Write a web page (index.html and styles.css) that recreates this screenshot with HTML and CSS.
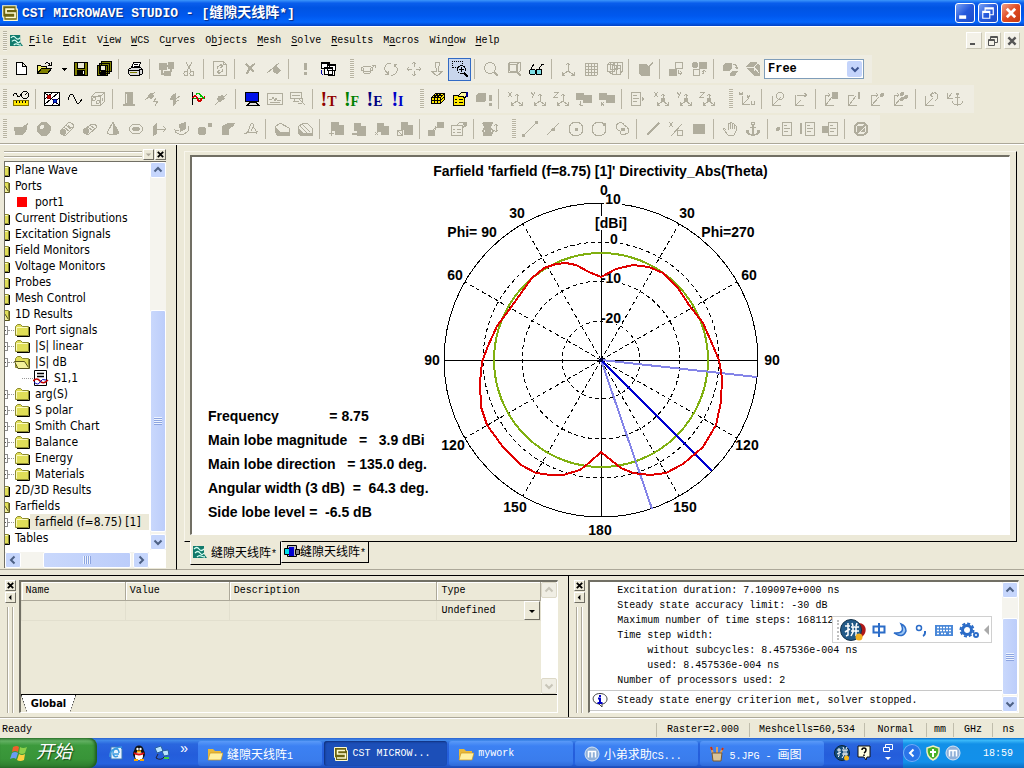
FILE: index.html
```
<!DOCTYPE html>
<html lang="zh-CN">
<head>
  <meta charset="UTF-8">
  <meta name="viewport" content="width=device-width, initial-scale=1.0">
  <title>CST MICROWAVE STUDIO</title>
  <link rel="stylesheet" href="styles.css">
</head>

<body>
  <!-- shared icons -->
  <svg class="sprite" aria-hidden="true">
    <symbol id="logo" viewBox="0 0 16 16">
      <path d="M1.500 1.500h12v3h1v10h-12v-3h-1z" fill="#6b6410" stroke="#fffbd0"/>
      <path d="M12 4.500H4.500v3.500h8v4H4" fill="none" stroke="#fffbd0" stroke-width="1.500"/>
    </symbol>
    <symbol id="waves" viewBox="0 0 16 14">
      <path d="M1 1h11v8l3 4H1z" fill="#117a6c"/>
      <path d="M2 4q3-3 5 0t5 0M3 8q3-3 5 0t4 0M5 12q2-2 4-1t4 1" fill="none" stroke="#d8fff4" stroke-width="1.300"/>
    </symbol>
    <symbol id="folder" viewBox="0 0 16 14">
      <path d="M15.500 4v9.500H3" fill="none" stroke="#000"/>
      <path d="M1.500 12.500v-9l2-2h3l2 2h6v9z" fill="#e0de58" stroke="#8c8a30"/>
      <path d="M2.500 11.500v-7h11" fill="none" stroke="#fbfac0"/>
    </symbol>
    <symbol id="folder-open" viewBox="0 0 16 14">
      <path d="M1.500 12.500v-9l2-2h3l2 2h6v9z" fill="#e0de58" stroke="#8c8a30"/>
      <path d="M15.500 4v9.500H4L.5 6.500h10l4 6" fill="#f3f19a" stroke="#55531a"/>
    </symbol>
    <symbol id="up" viewBox="0 0 10 10"><path d="M1.500 6.500L5 3l3.500 3.500" fill="none" stroke="currentColor" stroke-width="2"/></symbol>
    <symbol id="down" viewBox="0 0 10 10"><path d="M1.500 3.500L5 7l3.500-3.500" fill="none" stroke="currentColor" stroke-width="2"/></symbol>
    <symbol id="left" viewBox="0 0 10 10"><path d="M6.500 1.500L3 5l3.500 3.500" fill="none" stroke="currentColor" stroke-width="2"/></symbol>
    <symbol id="right" viewBox="0 0 10 10"><path d="M3.500 1.500L7 5 3.500 8.500" fill="none" stroke="currentColor" stroke-width="2"/></symbol>
    <symbol id="close" viewBox="0 0 10 10"><path d="M2 2l6 6M8 2L2 8" fill="none" stroke="currentColor" stroke-width="2"/></symbol>
    <symbol id="restore" viewBox="0 0 12 12"><path d="M3.500 4V1.500h7v6H8M3 2.500h8M1.500 4.500h6v6h-6zM1 5.500h7" fill="none" stroke="currentColor"/></symbol>
    <symbol id="yellow-folder" viewBox="0 0 16 16">
      <path d="M1 13V3h5l2 2h6v8z" fill="#e9b93a"/>
      <path d="M1 14l2-7h13l-2 7z" fill="#fff0a0" stroke="#c89520" stroke-width=".7"/>
    </symbol>
    <symbol id="pinyin" viewBox="0 0 16 16">
      <circle cx="8" cy="8" r="7.500" fill="#174d78" stroke="#0a2538"/>
      <path d="M3 5h4M5 3v8l-1 1M3 9l4-2M8 5h6M8 9h6M10 5v5l-2 3M12 5v8M9 2l1 2M13 2l-1 2" fill="none" stroke="#fff"/>
      <circle cx="12.500" cy="13" r="2.500" fill="#f6b81a"/>
    </symbol>
    <symbol id="maxthon" viewBox="0 0 16 16">
      <circle cx="8" cy="8" r="7" fill="#8fb0d8" stroke="#d8e6f6"/>
      <path d="M4.500 11.500v-6h7v6M8 5.500v6" fill="none" stroke="#fff" stroke-width="1.500"/>
    </symbol>
  </svg>

  <header class="title-bar">
    <svg class="title-icon"><use href="#logo"/></svg>
    <h1>CST MICROWAVE STUDIO - [<span class="han">缝隙天线阵</span>*]</h1>
    <button class="caption-btn" aria-label="Minimize"><svg viewBox="0 0 12 12"><path d="M1 9.500h6" stroke="#fff" stroke-width="3"/></svg></button>
    <button class="caption-btn" aria-label="Restore"><svg><use href="#restore"/></svg></button>
    <button class="caption-btn caption-close" aria-label="Close"><svg><use href="#close"/></svg></button>
  </header>

  <nav class="menu-bar">
    <span class="grip"></span>
    <svg class="menu-icon"><use href="#waves"/></svg>
    <button><u>F</u>ile</button>
    <button><u>E</u>dit</button>
    <button>V<u>i</u>ew</button>
    <button><u>W</u>CS</button>
    <button>C<u>u</u>rves</button>
    <button>O<u>b</u>jects</button>
    <button><u>M</u>esh</button>
    <button><u>S</u>olve</button>
    <button><u>R</u>esults</button>
    <button>M<u>a</u>cros</button>
    <button>Win<u>d</u>ow</button>
    <button><u>H</u>elp</button>
    <div class="child-btns">
      <button aria-label="Minimize"><svg viewBox="0 0 12 12"><path d="M2 9h5" stroke="#555" stroke-width="2"/></svg></button>
      <button aria-label="Restore"><svg><use href="#restore"/></svg></button>
      <button aria-label="Close"><svg><use href="#close"/></svg></button>
    </div>
  </nav>

  <!-- file / view tools -->
  <div class="toolbar-row">
    <div class="toolbar">
      <span class="grip"></span>
      <button class="tool"><svg><path d="M3.500 1.500h6l4 4v8h-10zM9.500 1.500v4h4" fill="#fff"/></svg></button>
      <button class="tool"><svg><path d="M1.500 12.500v-8h3l1 1h5v3" fill="#f4f060"/><path d="M1.500 12.500l4-5h10l-4 5z" fill="#808000"/><path d="M9 2.500q3-2 5 1M12 4h3V1"/></svg></button>
      <button class="tool tool-arrow"><svg viewBox="0 0 16 16"><path class="fill" d="M5 7h6L8 10z"/></svg></button>
      <button class="tool"><svg><path d="M1.500 1.500h13v13h-13z" fill="#808000"/><path d="M4.500 2v5h7V2" fill="#ece9d8"/><path class="fill" d="M4 9h8v5H4z"/><path d="M10.500 10v3" stroke="#fff"/></svg></button>
      <button class="tool"><svg><path d="M5.500.5h10v10h-10zM3.500 2.500h10v10h-10zM1.500 4.500h10v10h-10z" fill="#808000"/><path d="M4 5v4h5V5" fill="#ece9d8"/><path class="fill" d="M4 11h6v3H4z"/></svg></button>
      <span class="sep"></span>
      <button class="tool"><svg><path d="M4.500 7l2-5.500h7L11.500 7zM7 3.500h4M6.500 5.500h4" fill="#fff"/><path d="M1.500 8.500l3-2h9l2 2v4l-3 2h-9l-2-2zM1.500 9h11v5M12.500 9l3-1" fill="#ddd"/><path d="M3 11.500h7" stroke="#808000"/></svg></button>
      <span class="sep"></span>
      <button class="tool" disabled><svg><path class="fill" d="M1 2h8v7H1zM10 1h6v7h-6zM6 10h7v5H6z"/><path d="M3.500 9v4h3M12.500 8v3M4 5h7" stroke-width="2"/></svg></button>
      <button class="tool" disabled><svg><path d="M5 1l5 9M11 1L6 10"/><circle cx="5" cy="12.500" r="2"/><circle cx="11" cy="12.500" r="2"/></svg></button>
      <span class="sep"></span>
      <button class="tool" disabled><svg><path d="M1.500.5h10l3 3v11h-13zM11.500.5v3h3M5 8q0-4 5-3M8 3l3 2-3 2M11 8q0 4-5 3M8 13l-3-2 3-2"/></svg></button>
      <span class="sep"></span>
      <button class="tool" disabled><svg><path d="M3 3l8 8M12 3Q6 6 4 13" stroke-width="2"/></svg></button>
      <button class="tool" disabled><svg><path d="M1 12L13 2"/><path class="fill" d="M7 6l4-1 4 5-4 3-4-2z"/></svg></button>
      <span class="sep"></span>
      <button class="tool" disabled><svg><path d="M8 2v7M8 11v3" stroke-width="3"/></svg></button>
      <button class="tool"><svg><path d="M1 1.500h8v6H1zM1 2.500h8M7.500 3.500h8v6h-8zM7.500 4.500h8M4.500 6.500h8v7h-8zM4.500 7.500h8M8.500 9.500h6v5h-6z" fill="#fff"/><path d="M1 9v3l2 2" stroke="#0000a0"/></svg></button>
    </div>
    <div class="toolbar">
      <span class="grip"></span>
      <button class="tool" disabled><svg><ellipse cx="7" cy="8" rx="6" ry="2.500"/><path d="M3 7l1 5h6l1-5M12 7l3-3M12 4h3v3"/></svg></button>
      <button class="tool" disabled><svg><path d="M6 2Q1 4 2 9l3 4M2 13h3v-3M10 14q5-2 4-7l-3-4M14 3h-3v3M6 2h2M8 14h2"/></svg></button>
      <button class="tool" disabled><svg><path d="M8 1v5M8 10v5M1 8h5M10 8h5M6 3l2-2 2 2M6 13l2 2 2-2M3 6L1 8l2 2M13 6l2 2-2 2"/></svg></button>
      <button class="tool" disabled><svg><path d="M6 5V1h4v4l-1 2v3h5l-6 5-6-5h5V7z"/></svg></button>
      <button class="tool tool-on"><svg><path d="M.5 7V.5h10V4" stroke-dasharray="1 1"/><path d="M.5 6.500h5" stroke-dasharray="1 1"/><circle cx="9.500" cy="8.500" r="4"/><path d="M12 12l4 4" stroke-width="2"/><path d="M7 8.500h5M9.500 6v5"/></svg></button>
      <span class="sep"></span>
      <button class="tool" disabled><svg><circle cx="7" cy="7" r="5.500"/><path d="M11 11l4 4" stroke-width="2"/></svg></button>
      <button class="tool" disabled><svg><path d="M2 3l3-2h9v9l-2 2M2 3h9v8H2zM11 3l3-2"/><circle cx="7" cy="7" r="4"/><path d="M10 10l5 5" stroke-width="2"/></svg></button>
      <button class="tool"><svg><circle cx="3.500" cy="11" r="3" fill="#7fe0e8"/><circle cx="10" cy="11" r="3" fill="#7fe0e8"/><path d="M2 8l3-5M10 8l3-5 2 1M6 11h1"/></svg></button>
      <span class="sep"></span>
      <button class="tool" disabled><svg><path d="M8 2v8l-6 4M8 10l6 4M6 4l2-2 2 2M2 11v3h3M14 11v3h-3"/></svg></button>
      <button class="tool" disabled><svg><path d="M2 2.500h12M2 5.500h12M2 8.500h12M2 11.500h12M2 14.500h12M2.500 2v12M5.500 2v12M8.500 2v12M11.500 2v12M14.500 2v12"/></svg></button>
      <button class="tool" disabled><svg><path d="M4 1.500h7v7H4zM1 3.500h7v7H1zM6 4.500h8v9H6zM6 4.500l3-3h7v9l-2 3M1 3.500l3-2M8 7h6M10 4v9M8 14l-7-4"/></svg></button>
      <span class="sep"></span>
      <button class="tool" disabled><svg><path class="fill" d="M2 3h7l2 2 4-4 1 1-3 3v10H5l-3-2z"/></svg></button>
      <span class="sep"></span>
      <button class="tool" disabled><svg><path class="fill" d="M1 8h8v7H1z"/><path d="M7.500 1.500h7v6h-7zM10 9v3h4M12 10l2 2-2 2"/></svg></button>
      <button class="tool" disabled><svg><circle class="fill" cx="4" cy="4" r="3"/><path class="fill" d="M8 1h8v7H8z"/><path d="M2.500 8.500h6v6h-6zM11 13q2 0 2-4M11 11l2-2 2 2"/></svg></button>
      <span class="sep"></span>
      <button class="tool" disabled><svg><path class="fill" d="M1 4l3-2h6v6L7 10H1zM8 12l3-2h5l-3 5H8z"/><path d="M11 3q4 0 4 5M13 6l2 2 1-2"/></svg></button>
      <button class="tool" disabled><svg><path class="fill" d="M1 5l4-4h6l4 4v10H9L3 9z"/><path d="M2 6h7l5 6M9 6l4-4M9 6v4" stroke="#efede2"/></svg></button>
      <label class="combo"><select aria-label="Working mode"><option>Free</option></select><span class="combo-arrow"><svg><use href="#down"/></svg></span></label>
    </div>
  </div>

  <!-- solver / mesh / wcs tools -->
  <div class="toolbar-row">
    <div class="toolbar">
      <span class="grip"></span>
      <button class="tool"><svg><path d="M0 5q2-5 4-1t4-1"/><circle cx="12" cy="4" r="3.500"/><path d="M12 4l2-2"/><path d="M.5 9.500h15v5H.5z" fill="#ffe800" stroke="#807000"/><path d="M3.500 10v2M6.500 10v2M9.500 10v2M12.500 10v2"/></svg></button>
      <span class="sep"></span>
      <button class="tool"><svg><path d="M.5 1.500h15v13H.5z" fill="#fff"/><path d="M1 8l7-6M1 13L14 2M8 14l7-7M1 2l14 12" /><circle cx="5" cy="6" r="2" fill="#c00" stroke="#900"/><circle cx="11" cy="10" r="2" fill="#04c" stroke="#008"/></svg></button>
      <button class="tool"><svg><path d="M1 9q3-10 6-3t4 7 4-5"/></svg></button>
      <button class="tool" disabled><svg><path d="M1.500 5.500h9v9h-9zM1.500 5.500l4-4h9v9l-4 4M10.500 5.500l4-4"/><circle cx="4" cy="8" r="1.500"/><circle cx="8" cy="11" r="1.500"/><path d="M8 4h3M12 7v3"/></svg></button>
      <span class="sep"></span>
      <button class="tool" disabled><svg><path class="fill" d="M4 1h8v12h2v2H2v-2h2z"/><path d="M5.500 3v9" stroke="#efede2"/></svg></button>
      <button class="tool" disabled><svg><path class="fill" d="M4 4l3-2 3 3-3 3-3-1z"/><path d="M1 9l10-8M12 7l-2 3h4l-3 5"/></svg></button>
      <button class="tool" disabled><svg><path class="fill" d="M4 5l5-3v11l-3 2V9H3z"/><path d="M9 8l4-3M8 11l4-2"/></svg></button>
      <button class="tool"><svg><path d="M2.500 1v13"/><path d="M3 7h12" stroke="#00a000"/><path d="M3 7q2-5 4 0t4 2 4-3" stroke="#d00000" stroke-width="1.500"/><path d="M6 3q4-2 5 2l3 2" stroke="#00c000" stroke-width="1.500"/></svg></button>
      <button class="tool" disabled><svg><path d="M2 14L14 3"/><path class="fill" d="M5 5l5-1 2 4-5 3-3-2z"/></svg></button>
      <span class="sep"></span>
      <button class="tool"><svg><path d="M1.500 1.500h13v9h-13z" fill="#0010e8"/><path d="M4 13.500l2-2h6l3 3H3z" fill="#ddd"/></svg></button>
      <button class="tool" disabled><svg><path d="M.5 2.500h15v11H.5zM2 8h3l1-2 2 4 1-3 1 2h4M3 11h10"/></svg></button>
      <button class="tool" disabled><svg><path d="M.5 1.500h11v6H.5zM2 4h8M3 10h6M4.500 7v3M9 8l6 6M12 7v4M8 12h4"/></svg></button>
      <span class="sep"></span>
      <button class="tool solver solver-t">!<b>T</b></button>
      <button class="tool solver solver-f">!<b>F</b></button>
      <button class="tool solver solver-e">!<b>E</b></button>
      <button class="tool solver solver-i">!<b>I</b></button>
    </div>
    <div class="toolbar">
      <span class="grip"></span>
      <button class="tool"><svg><path d="M1.500 6.500l4-4h9v6l-4 4h-9z" fill="#ffe800"/><path d="M1.500 6.500h9v6M10.500 6.500l4-4M1.500 9.500h9l4-4M4.500 6.500v6M7.500 6.500v6M4 4h9M4.500 6l4-4M7.500 6l4-4"/></svg></button>
      <button class="tool"><svg><path d="M.5 4.500h11v10H.5z" fill="#ffe800"/><path d="M2 8.500h2M6 8.500h4M2 11.500h2M6 11.500h4"/><path d="M5 5l4-4 6 1-3 5-3-2-2 1z" fill="#fff8a0"/><path d="M14 1v5" stroke="#000090" stroke-width="2"/></svg></button>
      <button class="tool" disabled><svg><path class="fill" d="M0 4l2-2h8v7l-2 2H0z"/><path d="M14 4v6M14 12v3" stroke-width="3"/></svg></button>
      <span class="sep"></span>
      <button class="tool" disabled><svg><path d="M1 1l4 5M5 1L1 6M10 3v7l-6 4M10 10l5 4M8 5l2-2 2 2M4 11v3h3M12 14h3v-3"/></svg></button>
      <button class="tool" disabled><svg><path d="M1 1l2 3M5 1L2 7M10 3v7l-6 4M10 10l5 4M8 5l2-2 2 2M4 11v3h3M12 14h3v-3"/></svg></button>
      <button class="tool" disabled><svg><path d="M1 1.500h4L1 6.500h4M10 3v7l-6 4M10 10l5 4M8 5l2-2 2 2M4 11v3h3M12 14h3v-3"/></svg></button>
      <button class="tool" disabled><svg><path class="fill" d="M0 2h8v2h8v8H7V9H0z"/><path d="M4 10v4h3M5 12l-2 2"/></svg></button>
      <button class="tool" disabled><svg><path class="fill" d="M0 2h8v2h8v8H7V9H0z"/><path d="M2 11l3 4M5 11l-3 4"/></svg></button>
      <span class="sep"></span>
      <button class="tool" disabled><svg><path d="M1.500 1.500h9v13h-9zM3 4.500h4M3 7.500h6M3 10.500h4"/><path class="fill" d="M12 6l3 2-3 2z"/></svg></button>
      <button class="tool" disabled><svg><path d="M1 1l4 5M5 1L1 6M10 3v7l-6 4M10 10l5 4M8 5l2-2 2 2M4 11v3h3M12 14h3v-3"/><path class="fill" d="M8 7h4v4H8z"/></svg></button>
      <button class="tool" disabled><svg><path d="M1 1l2 3M5 1L2 7M10 3v7l-6 4M10 10l5 4M8 5l2-2 2 2M4 11v3h3M12 14h3v-3"/><path class="fill" d="M8 7h4v4H8z"/></svg></button>
      <button class="tool" disabled><svg><path d="M1 1.500h4L1 6.500h4M10 3v7l-6 4M10 10l5 4M8 5l2-2 2 2M4 11v3h3M12 14h3v-3"/><path class="fill" d="M8 7h4v4H8z"/></svg></button>
    </div>
    <div class="toolbar">
      <span class="grip"></span>
      <button class="tool" disabled><svg><path d="M0 1l1 3 1-2 1 2 1-3M3.500 5v8h7M4 13l6-6M8 4l1 3 2-3M12 10v3h3v-3"/></svg></button>
      <span class="sep"></span>
      <button class="tool" disabled><svg><path d="M2.500 5v9h8M3 14l8-8"/><circle cx="10" cy="5" r="3.500"/></svg></button>
      <button class="tool" disabled><svg><path d="M2.500 4v10h8M3 14l5-5M4 4h10M11 2l3 2-3 2"/></svg></button>
      <span class="sep"></span>
      <button class="tool" disabled><svg><path d="M1.500 4v10h8M2 14l6-8M1 4h5M4 2l2 2-2 2"/><path class="fill" d="M8 1h6v7H8z"/></svg></button>
      <button class="tool" disabled><svg><path d="M1.500 4v10h8M2 14l7-9M1 4h6"/><path d="M12 1v7" stroke-width="2"/></svg></button>
      <button class="tool" disabled><svg><path d="M1.500 4v10h8M2 14l7-8M1 4h7M6 2l2 2-2 2"/><circle class="fill" cx="12" cy="4" r="2"/></svg></button>
      <button class="tool" disabled><svg><path d="M1.500 4v10h8M2 14l6-7M1 4h5M4 2l2 2-2 2"/><circle class="fill" cx="9" cy="3" r="2"/><circle class="fill" cx="13" cy="6" r="2"/><circle class="fill" cx="9" cy="8" r="2"/></svg></button>
      <span class="sep"></span>
      <button class="tool" disabled><svg><path d="M1.500 5v9h8M2 14l7-7M6 4q6-5 8 1 0 3-3 5M9 1L6 4l3 2"/></svg></button>
      <button class="tool" disabled><svg><path d="M.5 2v5h5M1 7l4-5M10.500 4v10M8 6.500h5M5 10q1 4 5.500 4T16 10"/><circle cx="10.500" cy="3" r="1"/></svg></button>
    </div>
  </div>

  <!-- solids / curves / pick tools -->
  <div class="toolbar-row">
    <div class="toolbar">
      <span class="grip"></span>
      <button class="tool" disabled><svg><path class="fill" d="M1 6h8l6-4-2 9-4 3H2z"/></svg></button>
      <button class="tool" disabled><svg><circle class="fill" cx="8" cy="8" r="7"/><circle cx="6" cy="6" r="2.500" fill="#efede2"/></svg></button>
      <button class="tool" disabled><svg><path d="M1 10l8-8q5-1 6 4l-8 8q-5 1-6-4zM9 2q-1 5 6 4M5 6l6 5M7 4l6 5"/><circle class="fill" cx="4" cy="11" r="3"/></svg></button>
      <button class="tool" disabled><svg><path d="M1 9l9-6q4 0 5 3l-8 7q-5 1-6-4zM6 6l5 4M8 4l5 4"/><circle class="fill" cx="4" cy="10" r="3"/></svg></button>
      <button class="tool" disabled><svg><path d="M8 1L2 12q6 4 12 0z"/><path class="fill" d="M8 1v13l6-2z"/></svg></button>
      <button class="tool" disabled><svg><ellipse cx="8" cy="8" rx="6.500" ry="5"/><ellipse cx="8" cy="8" rx="3" ry="1.500" stroke-width="2"/></svg></button>
      <button class="tool" disabled><svg><path class="fill" d="M2 5l4-3v11l-4 2z"/><path d="M5 8h10M12 5l3 3-3 3"/></svg></button>
      <button class="tool" disabled><svg><path class="fill" d="M5 3l7-2v7L6 11z"/><path d="M1 9q2 5 8 5l5-4V5M2 12l-1-3 4 1"/></svg></button>
      <button class="tool" disabled><svg><circle class="fill" cx="5" cy="10" r="4.500"/><circle class="fill" cx="13" cy="4" r="2.500"/></svg></button>
      <button class="tool" disabled><svg><path class="fill" d="M2 14V6q3-4 8-4h5l-2 4q-4 0-4 4v4z"/></svg></button>
      <button class="tool" disabled><svg><path d="M1 13q4 0 5-5t3-6q3 2-1 8M1 13l4-2 6 1 4-2M9 6q4 1 5 7"/></svg></button>
      <span class="sep"></span>
      <button class="tool" disabled><svg><path d="M1 6l5-4 9 5v7H3L1 10z"/><path class="fill" d="M1 6l5 5h9v3H3l-2-3z"/></svg></button>
      <button class="tool" disabled><svg><path d="M1 6l5-4h4l5 5v7H3L1 10zM3 5l7 7M5 3l8 8"/><path class="fill" d="M1 7l5 5h9v3H3l-2-3z"/></svg></button>
      <span class="sep"></span>
      <button class="tool" disabled><svg><path class="fill" d="M3 1h8v3h5v10H7v-4H3z"/><path d="M3 10v5M.5 12.500h5"/></svg></button>
      <button class="tool" disabled><svg><path class="fill" d="M3 2h7v3h5v10H6v-5H3z"/><path d="M.5 12.500h5" stroke-width="2"/></svg></button>
      <button class="tool" disabled><svg><path class="fill" d="M3 2h7v3h5v9H7v-3H3z"/><path d="M1 11l3 3M4 11l-3 3"/></svg></button>
      <button class="tool" disabled><svg><path class="fill" d="M4 1h7v3h5v10H7V9H4z"/><path d="M.5 9.500h5v5h-5zM1 10l4 4"/></svg></button>
      <span class="sep"></span>
      <button class="tool" disabled><svg><path class="fill" d="M9 1h7v6H9zM0 9h7v6H0z"/><path d="M5 9l5-4M7 9V5h3" stroke-dasharray="1 1"/></svg></button>
      <button class="tool" disabled><svg><path d="M.5 4.500h11v10H.5zM2 8.500h2M6 8.500h4M2 11.500h2M6 11.500h4M5 5l4-4 6 1-3 5"/><path class="fill" d="M12 1h4v4l-3 1z"/></svg></button>
      <span class="sep"></span>
      <button class="tool" disabled><svg><path d="M1 2h9l-2 4 3 4-2 4H1M1 2l2 4-2 4 2 4M3 4h6M3 6h6M3 8h6M3 10h6M3 12h6" stroke-width="1.500"/><path d="M14 3v8M12 5l2-2 2 2M12 9l2 2 2-2"/></svg></button>
    </div>
    <div class="toolbar">
      <span class="grip"></span>
      <button class="tool" disabled><svg><path d="M2 14L14 2"/><path class="fill" d="M0 13h3v3H0zM13 0h3v3h-3z"/></svg></button>
      <button class="tool" disabled><svg><path d="M2 14L14 2"/><path class="fill" d="M6 8l4-2v4H7z"/></svg></button>
      <button class="tool" disabled><svg><circle cx="8" cy="8" r="7"/><path class="fill" d="M7 7h3v3H7z"/></svg></button>
      <button class="tool" disabled><svg><circle cx="8" cy="8" r="7"/><path class="fill" d="M12 2h3v3h-3z"/></svg></button>
      <button class="tool" disabled><svg><path d="M2 4q6-5 8 0 6 3 4 8-8 4-8-2-4-1-4-6z"/><path class="fill" d="M7 7h4v3H7z"/></svg></button>
      <span class="sep"></span>
      <button class="tool" disabled><svg><path d="M2 14L14 2" stroke-width="2"/></svg></button>
      <button class="tool" disabled><svg><path d="M1 1l4 5M5 1L1 6M3 15L14 3"/><path d="M9 9h5v5H9z"/></svg></button>
      <button class="tool" disabled><svg><path class="fill" d="M2 3h12v10H2z"/></svg></button>
      <span class="sep"></span>
      <button class="tool" disabled><svg><path d="M4 9L2 7q-2 0 0 2l4 5h6l2-4V5q-1-2-2 0V3q-1-2-2 0V2Q9 0 8 2v1Q7 1 6 3v6M8 3v5M10 3v5M12 5v3"/></svg></button>
      <button class="tool" disabled><svg><path d="M8 4v10M5 6.500h6M2 10q1 4 6 4t6-4M2 12v-2h2M14 12v-2h-2" stroke-width="1.500"/><circle cx="8" cy="2.500" r="1.500"/></svg></button>
      <span class="sep"></span>
      <button class="tool" disabled><svg><path d="M6.500 1.500h9v13h-9zM8 4.500h3M8 7.500h6M8 10.500h4"/><circle class="fill" cx="2" cy="8" r="2"/></svg></button>
      <button class="tool" disabled><svg><path d="M6.500 1.500h9v13h-9zM8 4.500h3M8 7.500h6M8 10.500h4"/><path d="M2 2v11" stroke-width="2"/></svg></button>
      <button class="tool" disabled><svg><path d="M6.500 1.500h9v13h-9zM8 4.500h3M8 7.500h6M8 10.500h4"/><path class="fill" d="M0 5h6v7H0z"/></svg></button>
      <span class="sep"></span>
      <button class="tool" disabled><svg><circle cx="8" cy="8" r="6.500" stroke-width="2"/><path d="M4 12l8-8" stroke-width="2"/><path class="fill" d="M4 5h6L4 11zM12 6v5H7z"/></svg></button>
    </div>
  </div>

  <main class="workspace">
    <aside class="sidebar">
      <div class="sidebar-head">
        <span class="dbl-line"></span>
        <button class="mini-btn" disabled aria-label="Menu"><svg viewBox="0 0 10 10"><path d="M2 4h6L5 7z" fill="currentColor"/></svg></button>
        <button class="mini-btn" aria-label="Close"><svg><use href="#close"/></svg></button>
      </div>
      <div class="tree-box">
        <ul class="tree">
          <li><svg><use href="#folder"/></svg><span>Plane Wave</span></li>
          <li><svg><use href="#folder-open"/></svg><span>Ports</span></li>
          <li class="lvl2"><i class="dots"></i><i class="port"></i><span>port1</span></li>
          <li><svg><use href="#folder"/></svg><span>Current Distributions</span></li>
          <li><svg><use href="#folder"/></svg><span>Excitation Signals</span></li>
          <li><svg><use href="#folder"/></svg><span>Field Monitors</span></li>
          <li><svg><use href="#folder"/></svg><span>Voltage Monitors</span></li>
          <li><svg><use href="#folder"/></svg><span>Probes</span></li>
          <li><svg><use href="#folder"/></svg><span>Mesh Control</span></li>
          <li><svg><use href="#folder-open"/></svg><span>1D Results</span></li>
          <li class="lvl2"><i class="plus"></i><i class="dots"></i><svg><use href="#folder"/></svg><span>Port signals</span></li>
          <li class="lvl2"><i class="plus"></i><i class="dots"></i><svg><use href="#folder"/></svg><span>|S| linear</span></li>
          <li class="lvl2"><i class="plus"></i><i class="dots"></i><svg><use href="#folder-open"/></svg><span>|S| dB</span></li>
          <li class="lvl3"><i class="dots"></i><svg viewBox="0 0 16 16"><path d="M1.500.5h12v15h-12z" fill="#fff" stroke="#000"/><path d="M4 3.500h7M4 6.500h7" stroke="#000" stroke-width="1.500"/><path d="M0 11q4-4 7 0t8-1" fill="none" stroke="#c00000" stroke-width="1.500"/><path d="M1 12q4 4 6 0t6-2" fill="none" stroke="#0000c0"/></svg><span>S1,1</span></li>
          <li class="lvl2"><i class="plus"></i><i class="dots"></i><svg><use href="#folder"/></svg><span>arg(S)</span></li>
          <li class="lvl2"><i class="plus"></i><i class="dots"></i><svg><use href="#folder"/></svg><span>S polar</span></li>
          <li class="lvl2"><i class="plus"></i><i class="dots"></i><svg><use href="#folder"/></svg><span>Smith Chart</span></li>
          <li class="lvl2"><i class="plus"></i><i class="dots"></i><svg><use href="#folder"/></svg><span>Balance</span></li>
          <li class="lvl2"><i class="plus"></i><i class="dots"></i><svg><use href="#folder"/></svg><span>Energy</span></li>
          <li class="lvl2"><i class="plus"></i><i class="dots"></i><svg><use href="#folder"/></svg><span>Materials</span></li>
          <li><svg><use href="#folder"/></svg><span>2D/3D Results</span></li>
          <li><svg><use href="#folder-open"/></svg><span>Farfields</span></li>
          <li class="lvl2 selected"><i class="plus"></i><i class="dots"></i><svg><use href="#folder"/></svg><span>farfield (f=8.75) [1]</span></li>
          <li><svg><use href="#folder"/></svg><span>Tables</span></li>
        </ul>
        <div class="scroll scroll-v">
          <button aria-label="Up"><svg><use href="#up"/></svg></button>
          <span class="track"></span>
          <span class="thumb tree-thumb"></span>
          <button aria-label="Down"><svg><use href="#down"/></svg></button>
        </div>
        <div class="scroll scroll-h">
          <button aria-label="Left"><svg><use href="#left"/></svg></button>
          <span class="track"></span>
          <span class="thumb"></span>
          <button aria-label="Right"><svg><use href="#right"/></svg></button>
        </div>
      </div>
    </aside>

    <section class="mdi">
      <div class="child-window">
        <div class="canvas">
          <h2>Farfield 'farfield (f=8.75) [1]' Directivity_Abs(Theta)</h2>
          <div class="plot">
            <div class="readout">
              <p>Frequency             = 8.75</p>
              <p>Main lobe magnitude   =   3.9 dBi</p>
              <p>Main lobe direction   = 135.0 deg.</p>
              <p>Angular width (3 dB)  =  64.3 deg.</p>
              <p>Side lobe level =  -6.5 dB</p>
            </div>
            <svg class="polar" viewBox="-182 -179 364 356">
              <g fill="none" stroke="#000">
                <circle r="157"/>
                <g stroke-dasharray="4 3">
                  <circle r="118"/>
                  <circle r="79"/>
                  <circle r="39"/>
                  <path d="M0 0L78-136M0 0L136-78M0 0L136 78M0 0L78 136M0 0L-78 136M0 0L-136 78M0 0L-136-78M0 0L-78-136"/>
                </g>
                <path d="M-157 .5H157M.5-157V157"/>
              </g>
              <path d="M-5-144h31v14H-5zM3-169h18v14H3zM9-128h10v13H9zM5-88h16v12H5zM5-48h16v12H5z" fill="#fff"/>
              <circle r="107" fill="none" stroke="#80b010" stroke-width="2"/>
              <g class="plot-text">
                <text x="3" y="-165">0</text>
                <text x="12" y="-156">10</text>
                <text x="10" y="-132">[dBi]</text>
                <text x="13" y="-116">0</text>
                <text x="10" y="-77">-10</text>
                <text x="10" y="-37">-20</text>
                <text x="-84" y="-142">30</text>
                <text x="86" y="-142">30</text>
                <text x="-129" y="-123">Phi= 90</text>
                <text x="127" y="-123">Phi=270</text>
                <text x="-146" y="-80">60</text>
                <text x="148" y="-80">60</text>
                <text x="-169" y="5">90</text>
                <text x="171" y="5">90</text>
                <text x="-148" y="90">120</text>
                <text x="146" y="90">120</text>
                <text x="-86" y="152">150</text>
                <text x="84" y="152">150</text>
                <text x="-1" y="175">180</text>
              </g>
              <path d="M0 0L156 17M0 0L51 149" stroke="#8484e8" stroke-width="2"/>
              <path d="M0 0L111 111" stroke="#0000d0" stroke-width="2"/>
              <path fill="none" stroke="#e00000" stroke-width="2" stroke-linejoin="round" d="M0-83L-12-88L-25-95L-35-97L-45-96L-57-92L-69-82L-77-71L-92-50L-104-34L-113-14L-119 2L-121 22L-120 47L-114 65L-98 87L-80 105L-65 113L-50 115L-38 115L-21 110L-11 102L0 92L11 101L20 108L32 113L49 115L65 113L82 104L102 87L115 65L120 42L121 18L118 0L112-14L102-37L88-55L77-72L62-87L48-93L32-95L15-91Z"/>
              <circle r="2" fill="#000040"/>
            </svg>
          </div>
        </div>
      </div>
      <div class="tabs">
        <button class="tab tab-on"><svg><use href="#waves"/></svg><span>缝隙天线阵<b>*</b></span></button>
        <button class="tab"><svg viewBox="0 0 16 14"><path d="M3.500 1.500h9v11h-9z" fill="#bbb" stroke="#000"/><path d="M.5 4.500h5v6h-5z" fill="#00e0e8" stroke="#000"/><path d="M5 3h5v9H5z" fill="#0000d0"/><path d="M11.500 5.500h4v5h-4z" fill="#888" stroke="#000"/></svg><span>缝隙天线阵<b>*</b></span></button>
      </div>
    </section>
  </main>

  <section class="docks">
    <div class="dock params">
      <div class="dock-strip">
        <button class="mini-btn" aria-label="Close"><svg><use href="#close"/></svg></button>
        <button class="mini-btn" aria-label="Collapse"><svg viewBox="0 0 10 10"><path d="M6 2v6L3 5z" fill="currentColor"/></svg></button>
        <span class="dbl-line-v"></span>
      </div>
      <div class="param-box">
        <div class="param-body">
          <table>
            <thead>
              <tr><th>Name</th><th>Value</th><th class="wide">Description</th><th>Type</th></tr>
            </thead>
            <tbody>
              <tr>
                <td></td>
                <td></td>
                <td></td>
                <td><label class="type-cell"><select aria-label="Type"><option>Undefined</option></select><span class="type-arrow"><svg viewBox="0 0 10 10"><path d="M2 4h6L5 7z" fill="currentColor"/></svg></span></label></td>
              </tr>
            </tbody>
          </table>
          <div class="scroll scroll-v scroll-off">
            <button disabled aria-label="Up"><svg><use href="#up"/></svg></button>
            <span class="track"></span>
            <button disabled aria-label="Down"><svg><use href="#down"/></svg></button>
          </div>
        </div>
        <div class="sheet-tabs"><button>Global</button></div>
      </div>
    </div>
    <div class="dock messages">
      <div class="dock-strip">
        <button class="mini-btn" aria-label="Close"><svg><use href="#close"/></svg></button>
        <button class="mini-btn" aria-label="Collapse"><svg viewBox="0 0 10 10"><path d="M6 2v6L3 5z" fill="currentColor"/></svg></button>
        <span class="dbl-line-v"></span>
      </div>
      <div class="log">
        <div class="log-body">
          <div class="log-item">
            <p>Excitation duration: 7.109097e+000 ns</p>
            <p>Steady state accuracy limit: -30 dB</p>
            <p>Maximum number of time steps: 168112</p>
            <p>Time step width:</p>
            <p class="indent">without subcycles: 8.457536e-004 ns</p>
            <p class="indent">used: 8.457536e-004 ns</p>
            <p>Number of processors used: 2</p>
          </div>
          <div class="log-item log-info">
            <svg viewBox="0 0 16 16"><path d="M8 1.500c9 0 9 10 2 10.500v3l-3-3C-1 11.500-1 1.500 8 1.500z" fill="#fff" stroke="#444"/><path d="M8 3v2M6 6.500h2V11M5.500 11h5" fill="none" stroke="#0000c8" stroke-width="2"/></svg>
            <p>Steady state energy criterion met, solver stopped.</p>
          </div>
        </div>
        <div class="scroll scroll-v">
          <button aria-label="Up"><svg><use href="#up"/></svg></button>
          <span class="track"></span>
          <span class="thumb log-thumb"></span>
          <button aria-label="Down"><svg><use href="#down"/></svg></button>
        </div>
      </div>
      <div class="ime">
        <span class="ime-grip"></span>
        <svg class="ime-logo" viewBox="0 0 26 24"><path d="M17 5c11-1 11 12 3 15z" fill="#b01818"/><circle cx="11" cy="12" r="10.500" fill="#235a88" stroke="#12304a"/><path d="M5 8h5M8 5v12l-2 1M5 14l5-3M11 9h8M11 13h8M13 9v5l-2 4M16 9v9M12 5l1 3M17 5l-1 3" fill="none" stroke="#fff" stroke-width="1.500"/><circle cx="19" cy="19" r="3.500" fill="#f4b020"/></svg>
        <svg viewBox="0 0 16 16"><path d="M2.500 4.500h11v6h-11zM8 1v14" fill="none" stroke="#2b6cc8" stroke-width="2"/></svg>
        <svg viewBox="0 0 16 16"><path d="M9 2q5 10-7 9 9 6 12-2Q14 4 9 2z" fill="#9cc6f4" stroke="#2b6cc8" stroke-width="1.500"/></svg>
        <svg viewBox="0 0 16 16"><circle cx="6" cy="6" r="2.500" fill="none" stroke="#2b6cc8" stroke-width="1.500"/><path d="M12 9v2q0 2-2 3" fill="none" stroke="#2b6cc8" stroke-width="2"/></svg>
        <svg class="ime-keys" viewBox="0 0 20 16"><path d="M1 3h18v11H1z" fill="#4a88d8"/><path d="M3 5.500h14M3 8.500h14M3 11.500h2M7 11.500h6M15 11.500h2" stroke="#fff" stroke-width="1.500" stroke-dasharray="2 1"/></svg>
        <svg class="ime-keys" viewBox="0 0 20 16"><circle cx="8" cy="8" r="4.500" fill="none" stroke="#2b6cc8" stroke-width="3"/><circle cx="8" cy="8" r="6.500" fill="none" stroke="#2b6cc8" stroke-width="2" stroke-dasharray="3 2"/><circle cx="17" cy="13" r="2" fill="none" stroke="#2b6cc8" stroke-width="2"/></svg>
        <svg class="ime-end" viewBox="0 0 6 12"><path d="M5 1v10L0 6z" fill="#aaa"/></svg>
      </div>
    </div>
  </section>

  <footer class="status">
    <span class="ready">Ready</span>
    <span class="cell cell-raster">Raster=2.000</span>
    <span class="cell cell-mesh">Meshcells=60,534</span>
    <span class="cell cell-mode">Normal</span>
    <span class="cell cell-len">mm</span>
    <span class="cell cell-freq">GHz</span>
    <span class="cell cell-time">ns</span>
  </footer>

  <div class="taskbar">
    <button class="start">
      <svg viewBox="0 0 20 18"><path d="M3 3q4-2 6 0L8 8Q5 6 2 8z" fill="#f0602c"/><path d="M10 3q3 2 7 0l-2 6q-3 2-6 0z" fill="#8cd04a"/><path d="M2 9q3-2 6 0l-2 6q-2-2-6 0z" fill="#6a9cf4"/><path d="M9 10q3 2 6 0l-1 6q-4 2-7 0z" fill="#fcd040"/></svg>
      <span>开始</span>
    </button>
    <div class="quick">
      <svg viewBox="0 0 16 16"><path d="M3 2h9l2 2v10H3z" fill="#e8f4ff" stroke="#3a78b8"/><path d="M11 9H5q1 4 5 2M5 8q0-4 3-4t3 4M2 12Q1 3 14 2" fill="none" stroke="#3a9ae0" stroke-width="1.500"/></svg>
      <svg viewBox="0 0 16 16"><ellipse cx="8" cy="9" rx="6" ry="6" fill="#111"/><circle cx="8" cy="5" r="4.500" fill="#111"/><ellipse cx="8" cy="11" rx="4" ry="4" fill="#fff"/><path d="M3 8q5 3 10 0" stroke="#e01010" stroke-width="2" fill="none"/><circle cx="6.500" cy="4" r="1.200" fill="#fff"/><circle cx="9.500" cy="4" r="1.200" fill="#fff"/><path d="M6 6.500h4M3 15h4M9 15h4" stroke="#f8a800" stroke-width="2"/></svg>
      <svg viewBox="0 0 16 16"><path d="M1 3l6-2 2 5-6 2zM8 6l6-1 1 5-5 1z" fill="#b8e4ff" stroke="#2860a0"/><path d="M4 9l-2 4q5 3 8-1l5 2" fill="none" stroke="#223"/><path d="M10 13h5" stroke="#40d040" stroke-width="2"/></svg>
      <span class="more">»</span>
    </div>
    <div class="tasks">
      <button class="task"><svg><use href="#yellow-folder"/></svg><span><span class="han">缝隙天线阵</span>1</span></button>
      <button class="task task-on"><svg><use href="#logo"/></svg><span>CST MICROW...</span></button>
      <button class="task"><svg><use href="#yellow-folder"/></svg><span>mywork</span></button>
      <button class="task"><svg><use href="#maxthon"/></svg><span><span class="han">小弟求助</span>CS...</span></button>
      <button class="task"><svg viewBox="0 0 16 16"><path d="M4 8L2 1M8 8V1M11 8l3-6" stroke="#d8a060" stroke-width="2"/><path d="M2 1l1 3M14 2l-1 2" stroke="#c03020" stroke-width="2"/><path d="M3 7h10l-1 8H4z" fill="#d8c49a" stroke="#7a5a30"/></svg><span>5.JPG - <span class="han">画图</span></span></button>
    </div>
    <div class="lang">
      <svg><use href="#pinyin"/></svg>
      <svg viewBox="0 0 16 16"><path d="M2 1h12v11h-3l-1 3-2-3H2z" fill="#ffffe0" stroke="#111"/><path d="M6 5q0-2 2-2t2 2-2 3M8 9.500v1.500" fill="none" stroke="#000" stroke-width="1.500"/></svg>
      <svg viewBox="0 0 12 20"><path d="M3.500 4V1.500h7v5H8M1.500 4.500h6v4h-6z" fill="none" stroke="#fff"/><path d="M3 14h6l-3 3z" fill="#fff"/></svg>
    </div>
    <div class="tray">
      <button class="tray-more" aria-label="Show hidden icons"><svg><use href="#left"/></svg></button>
      <svg viewBox="0 0 16 16"><path d="M8 1l6 2q1 9-6 12Q1 12 2 3z" fill="#48b028" stroke="#f0f0c0" stroke-width="1.500"/><path d="M8 4v8M5 7h6" stroke="#fff" stroke-width="2"/></svg>
      <svg><use href="#maxthon"/></svg>
      <time>18:59</time>
    </div>
  </div>
</body>
</html>
```
FILE: styles.css
```
* {
  box-sizing: border-box;
}

body {
  margin: 0;
  height: 100vh;
  display: flex;
  flex-direction: column;
  overflow: hidden;
  background: #ece9d8;
  color: #000;
  font-family: "Liberation Mono", "Noto Sans CJK SC", monospace;
  font-size: 10px;
}

button,
select {
  margin: 0;
  padding: 0;
  border: none;
  border-radius: 0;
  background: none;
  color: inherit;
  font: inherit;
}

svg {
  display: block;
  flex: none;
  width: 16px;
  height: 16px;
}

h1,
h2,
p,
ul {
  margin: 0;
  padding: 0;
}

.sprite {
  position: absolute;
  width: 0;
  height: 0;
}

.han {
  font-size: 12px;
}

/* title bar */
.title-bar {
  flex: none;
  height: 26px;
  display: flex;
  align-items: center;
  gap: 3px;
  padding: 0 3px 0 1px;
  background: linear-gradient(#3c96fb 0, #0a5eec 12%, #0054e3 30%, #0058ee 60%, #0466fc 85%, #0242c4 100%);
  color: #fff;
}

.title-bar h1 {
  flex: 1;
  font-size: 13px;
  line-height: 20px;
  white-space: nowrap;
  text-shadow: 1px 1px 1px #0a2a80;
}

.title-bar .han {
  font-size: 14px;
}

.title-icon {
  width: 18px;
  height: 18px;
}

.caption-btn {
  width: 20px;
  height: 20px;
  display: grid;
  place-items: center;
  border: 1px solid #fff;
  border-radius: 3px;
  background: linear-gradient(135deg, #7aa2f4, #2458dc 50%, #1c4cc8);
}

.caption-btn svg {
  width: 14px;
  height: 14px;
}

.caption-close {
  background: linear-gradient(135deg, #f0a088, #e04a20 50%, #c43810);
}

/* menu and toolbars */
.menu-bar {
  flex: none;
  height: 28px;
  display: flex;
  align-items: center;
  border-top: 1px solid #fff;
}

.menu-bar > button {
  padding: 3px 5px;
  line-height: 14px;
}

.menu-bar u {
  text-underline-offset: 2px;
}

.grip {
  flex: none;
  width: 4px;
  height: 20px;
  margin: 0 2px 0 3px;
  background: repeating-linear-gradient(#b8b4a2 0 1px, #f4f2e8 1px 2px);
}

.menu-icon {
  width: 15px;
  height: 13px;
}

.child-btns {
  display: flex;
  gap: 3px;
  margin-left: auto;
  padding-right: 4px;
}

.child-btns button {
  width: 16px;
  height: 17px;
  display: grid;
  place-items: center;
  border: 1px solid #fff;
  border-right-color: #c8c5b4;
  border-bottom-color: #c8c5b4;
  background: #f3f1e8;
  color: #555;
}

.child-btns svg {
  width: 12px;
  height: 12px;
}

.toolbar-row {
  flex: none;
  height: 30px;
  display: flex;
  align-items: center;
}

.toolbar-row:nth-of-type(3) {
  border-bottom: 1px solid #aca899;
}

.toolbar {
  height: 28px;
  display: flex;
  align-items: center;
  padding-right: 8px;
  background: #efede2;
}

.tool {
  flex: none;
  width: 23px;
  height: 23px;
  display: grid;
  place-items: center;
  border: 1px solid transparent;
}

.tool svg {
  overflow: visible;
  fill: none;
  stroke: currentColor;
  shape-rendering: crispEdges;
}

.tool .fill {
  fill: currentColor;
  stroke: none;
}

.tool:disabled {
  color: #b0ad9d;
}

.tool-arrow {
  width: 14px;
}

.tool-on {
  border-color: #316ac5;
  background: #c9d6ec;
}

.solver {
  display: block;
  font-family: "Liberation Serif", serif;
  font-size: 20px;
  font-weight: bold;
  line-height: 20px;
  white-space: nowrap;
}

.solver b {
  font-size: 14px;
}

.solver-t { color: #900000; }
.solver-f { color: #008000; }
.solver-e { color: #000080; }
.solver-i { color: #0000c8; }

.sep {
  flex: none;
  width: 8px;
  height: 20px;
  background: linear-gradient(90deg, transparent 3px, #b8b4a4 3px 4px, transparent 4px);
}

.combo {
  position: relative;
  width: 100px;
  height: 20px;
}

.combo select {
  width: 100%;
  height: 100%;
  padding-left: 3px;
  border: 1px solid #7f9db9;
  background: #fff;
  font-size: 12px;
  font-weight: bold;
  appearance: none;
}

.combo-arrow {
  position: absolute;
  top: 2px;
  right: 2px;
  width: 15px;
  height: 16px;
  display: grid;
  place-items: center;
  border-radius: 2px;
  background: #c4d4fb;
  color: #3c5490;
  pointer-events: none;
}

.combo-arrow svg {
  width: 10px;
  height: 10px;
}

/* scroll bars */
.scroll {
  display: flex;
  background: #f5f4ee;
  color: #4d6185;
}

.scroll-v {
  flex-direction: column;
  width: 16px;
}

.scroll-h {
  height: 16px;
}

.scroll button {
  flex: none;
  width: 16px;
  height: 16px;
  display: grid;
  place-items: center;
  border: 1px solid #fff;
  border-radius: 2px;
  background: #c6d6fc;
}

.scroll button svg {
  width: 10px;
  height: 10px;
}

.scroll-off button {
  background: #f0eee4;
  border-color: #ddd9c8;
  color: #c8c5b8;
}

.track {
  flex: 1;
}

.thumb {
  display: grid;
  place-items: center;
  border: 1px solid #fff;
  border-radius: 2px;
  background: linear-gradient(90deg, #c9d8fc, #bccdfa);
}

.thumb::after {
  content: "";
  width: 8px;
  height: 8px;
  background: repeating-linear-gradient(#eef4fe 0 1px, #8ca4e0 1px 2px);
}

.scroll-h .thumb::after {
  background: repeating-linear-gradient(90deg, #eef4fe 0 1px, #8ca4e0 1px 2px);
}

/* main work area */
.workspace {
  flex: 1;
  min-height: 0;
  display: flex;
  padding-bottom: 5px;
  border-top: 1px solid #fff;
}

.sidebar {
  flex: none;
  width: 177px;
  display: flex;
  flex-direction: column;
  padding: 2px 10px 1px 4px;
  border-right: 1px solid #000;
  border-bottom: 1px solid #aca899;
}

.sidebar-head {
  display: flex;
  align-items: center;
  gap: 1px;
  height: 14px;
}

.dbl-line {
  flex: 1;
  height: 6px;
  border: 1px solid #aca899;
  border-width: 1px 0;
  box-shadow: 0 1px #fff, inset 0 1px #fff;
}

.mini-btn {
  flex: none;
  width: 11px;
  height: 11px;
  display: grid;
  place-items: center;
  border: 1px solid #fff;
  border-right-color: #716f64;
  border-bottom-color: #716f64;
  background: #ece9d8;
}

.mini-btn:disabled {
  color: #aca899;
}

.mini-btn svg {
  width: 9px;
  height: 9px;
}

.tree-box {
  flex: 1;
  min-height: 0;
  display: grid;
  grid-template: minmax(0, 1fr) 16px / minmax(0, 1fr) 16px;
  gap: 2px 1px;
  border: 1px solid #716f64;
  border-width: 1px 0 0 1px;
  background: #fff;
}

.tree-box .scroll-h {
  grid-column: 1;
}

.tree {
  overflow: hidden;
  list-style: none;
  font-family: "DejaVu Sans Condensed", "DejaVu Sans", sans-serif;
  font-size: 12px;
}

.tree li {
  display: flex;
  align-items: center;
  height: 16px;
  margin-left: -11px;
  line-height: 16px;
  white-space: nowrap;
}

.tree svg {
  height: 14px;
}

.tree span {
  padding-left: 5px;
}

.tree .lvl2 {
  padding-left: 5px;
}

.tree .lvl3 {
  padding-left: 28px;
}

.tree .lvl3 svg {
  height: 16px;
}

.plus {
  width: 9px;
  height: 9px;
  border: 1px solid #8c8c8c;
  background: linear-gradient(#555, #555) center / 5px 1px no-repeat;
}

.dots {
  width: 6px;
  border-top: 1px dotted #999;
}

.lvl3 .dots {
  width: 11px;
}

.port {
  width: 10px;
  height: 10px;
  margin: 0 3px 0 12px;
  background: #f00;
}

.tree .selected span {
  flex: 1;
  background: #ece9d8;
}

.tree-thumb {
  height: 222px;
  margin-bottom: 2px;
}

.scroll-h .thumb {
  width: 88px;
  margin-right: 2px;
}

.mdi {
  flex: 1;
  min-width: 0;
  display: flex;
  flex-direction: column;
  padding: 6px 7px 3px;
  border-bottom: 1px solid #aca899;
}

.child-window {
  flex: 1;
  min-height: 0;
  display: flex;
  padding: 3px 6px 6px 5px;
  border: 1px solid #f8f6ec;
  border-right-color: #000;
  border-bottom-color: #000;
}

.canvas {
  flex: 1;
  min-width: 0;
  border: 2px solid #716f64;
  border-right: 1px solid #fff;
  border-bottom: 1px solid #fff;
  background: #fff;
  font-family: "Liberation Sans", Arial, sans-serif;
  font-size: 14px;
  font-weight: bold;
}

.canvas h2 {
  padding-top: 4px;
  font-size: 14px;
  line-height: 20px;
  text-align: center;
}

.plot {
  display: grid;
  grid-template-columns: 1fr 364px 1fr;
}

.readout {
  align-self: end;
  width: 0;
  padding: 0 0 13px 16px;
  line-height: 24px;
}

.readout p {
  white-space: pre;
}

.polar {
  width: 364px;
  height: 356px;
  shape-rendering: crispEdges;
}

.plot-text {
  text-anchor: middle;
}

.tabs {
  flex: none;
  display: flex;
  align-items: flex-start;
  height: 25px;
  margin-top: -1px;
  padding-left: 6px;
}

.tab {
  display: flex;
  align-items: center;
  height: 22px;
  padding: 0 2px 2px;
  border: 1px solid #000;
  border-left: 1px solid #fff;
  background: #ece9d8;
  font-size: 12px;
}

.tab b {
  font-size: 10px;
  font-weight: normal;
}

.tab svg {
  height: 14px;
}

.tab-on {
  height: 24px;
  gap: 3px;
  padding: 0 3px 2px 1px;
  border-top-color: #ece9d8;
}

/* docked windows */
.docks {
  flex: none;
  height: 143px;
  display: flex;
  border-top: 1px solid #000;
  border-bottom: 1px solid #aca899;
}

.dock {
  display: flex;
  gap: 3px;
  padding: 4px 5px;
}

.params {
  width: 55.6%;
  padding-right: 10px;
  border-right: 1px solid #000;
}

.messages {
  flex: 1;
  position: relative;
}

.dock-strip {
  flex: none;
  width: 11px;
  display: flex;
  flex-direction: column;
  gap: 1px;
}

.dbl-line-v {
  flex: 1;
  width: 6px;
  margin: 3px 0 0 2px;
  border: 1px solid #aca899;
  border-width: 0 1px;
  box-shadow: 1px 0 #fff, inset 1px 0 #fff;
}

.param-box,
.log {
  flex: 1;
  min-width: 0;
  border: 1px solid #fff;
  border-top: 2px solid #716f64;
  border-left: 2px solid #716f64;
}

.param-box {
  display: flex;
  flex-direction: column;
}

.param-body {
  flex: 1;
  display: flex;
  align-items: stretch;
  border-bottom: 1px solid #000;
}

.param-body table {
  flex: 1;
  width: 100%;
  height: 39px;
  border-collapse: collapse;
  table-layout: fixed;
}

.param-body .scroll {
  flex: none;
  background: #fff;
}

.param-body th {
  height: 18px;
  padding: 0 4px;
  border-right: 1px solid #aca899;
  border-bottom: 1px solid #aca899;
  font-weight: normal;
  text-align: left;
  box-shadow: inset 1px 1px #fff;
}

.param-body .wide {
  width: 40%;
}

.param-body td {
  height: 20px;
  padding: 0 0 0 4px;
  border: 1px solid #e2dfce;
}

.type-cell {
  position: relative;
  display: block;
}

.type-cell select {
  width: 100%;
  height: 18px;
  appearance: none;
}

.type-arrow {
  position: absolute;
  top: 0;
  right: 0;
  width: 16px;
  height: 19px;
  display: grid;
  place-items: center;
  border: 1px solid #fff;
  border-right-color: #716f64;
  border-bottom-color: #716f64;
  background: #ece9d8;
  pointer-events: none;
}

.type-arrow svg {
  width: 10px;
  height: 10px;
}

.sheet-tabs {
  flex: none;
  height: 17px;
}

.sheet-tabs button {
  width: 55px;
  height: 17px;
  background:
    linear-gradient(71deg, transparent 5px, #000 5px 6px, transparent 6px),
    linear-gradient(-71deg, transparent 5px, #000 5px 6px, transparent 6px),
    #fff;
  clip-path: polygon(0 0, 100% 0, 49px 100%, 6px 100%);
  font-family: "DejaVu Sans Condensed", "DejaVu Sans", sans-serif;
  font-size: 11px;
  font-weight: bold;
}

.log {
  display: flex;
  background: #fff;
}

.log-body {
  flex: 1;
  overflow: hidden;
}

.log-item {
  padding: 1px 0 2px 27px;
  line-height: 15px;
  white-space: nowrap;
  border-bottom: 1px solid #c8c8c8;
}

.indent {
  padding-left: 30px;
}

.log-info {
  display: flex;
  align-items: center;
  gap: 9px;
  height: 20px;
  padding-left: 2px;
}

.log-thumb {
  height: 77px;
  margin-bottom: 1px;
}

/* floating input method bar */
.ime {
  position: absolute;
  right: 32px;
  top: 40px;
  width: 160px;
  height: 27px;
  display: flex;
  align-items: center;
  gap: 5px;
  padding: 0 2px 0 4px;
  border: 1px solid #d0d0d0;
  background: #fff;
}

.ime-grip {
  height: 20px;
  border-left: 2px dotted #c0c0c0;
  margin-right: -4px;
}

.ime .ime-logo {
  width: 26px;
  height: 24px;
}

.ime .ime-keys {
  width: 20px;
}

.ime .ime-end {
  width: 6px;
  height: 12px;
}

/* status bar */
.status {
  flex: none;
  height: 20px;
  display: flex;
  align-items: center;
  border-top: 1px solid #fff;
  padding: 2px 0 0 2px;
}

.ready {
  flex: 1;
}

.cell {
  height: 14px;
  border-left: 1px solid #c0bdac;
  line-height: 14px;
  text-align: center;
}

.cell-raster { width: 93px; }
.cell-mesh { width: 115px; }
.cell-mode { width: 62px; }
.cell-len { width: 27px; }
.cell-freq { width: 39px; }
.cell-time { width: 32px; }

/* taskbar */
.taskbar {
  flex: none;
  height: 30px;
  display: flex;
  background: linear-gradient(#2a62d0 0, #4088ea 8%, #2a66de 20%, #245ddb 55%, #2562df 86%, #1c4ab4 100%);
  color: #fff;
}

.start {
  width: 97px;
  display: flex;
  align-items: center;
  gap: 6px;
  padding-left: 10px;
  border-radius: 0 8px 8px 0;
  background: linear-gradient(#3c8a3c 0, #62b062 10%, #3c9a3c 25%, #389438 70%, #2c782c 100%);
  box-shadow: inset -2px 0 3px #1d5a1d;
  font-size: 18px;
  font-style: italic;
  line-height: 24px;
  text-shadow: 1px 1px 1px #1a4a1a;
}

.start svg {
  width: 20px;
  height: 18px;
}

.quick {
  flex: none;
  width: 101px;
  display: flex;
  align-items: center;
  gap: 7px;
  padding-left: 11px;
}

.quick .more {
  font-size: 14px;
  line-height: 14px;
  padding: 0 0 8px 3px;
}

.tasks {
  flex: 1;
  display: flex;
  gap: 2px;
  padding: 3px 0 2px;
}

.task {
  flex: 1;
  min-width: 0;
  display: flex;
  align-items: center;
  gap: 4px;
  padding-left: 9px;
  border-radius: 3px;
  background: linear-gradient(#5a9af8 0, #3c81f3 20%, #3a7cec 80%, #2f6ad8 100%);
  white-space: nowrap;
}

.task-on {
  background: #1c4fb8;
  box-shadow: inset 1px 1px 2px #10307a;
}

.lang {
  flex: none;
  width: 79px;
  display: flex;
  align-items: center;
  gap: 6px;
  padding-left: 10px;
}

.lang svg:last-child {
  width: 12px;
  height: 20px;
  margin-left: 4px;
}

.tray {
  flex: none;
  width: 121px;
  display: flex;
  align-items: center;
  gap: 4px;
  background: linear-gradient(#0c72d0 0, #3ab8f8 8%, #1290e8 20%, #1290ea 80%, #0c6cc0 100%);
}

.tray-more {
  width: 18px;
  height: 18px;
  display: grid;
  place-items: center;
  border-radius: 50%;
  background: #2a74e8;
  box-shadow: inset 0 0 0 1px #70b0f8;
}

.tray-more svg {
  width: 10px;
  height: 10px;
}

.tray time {
  margin: 0 11px 0 auto;
  font-size: 10px;
}
```
